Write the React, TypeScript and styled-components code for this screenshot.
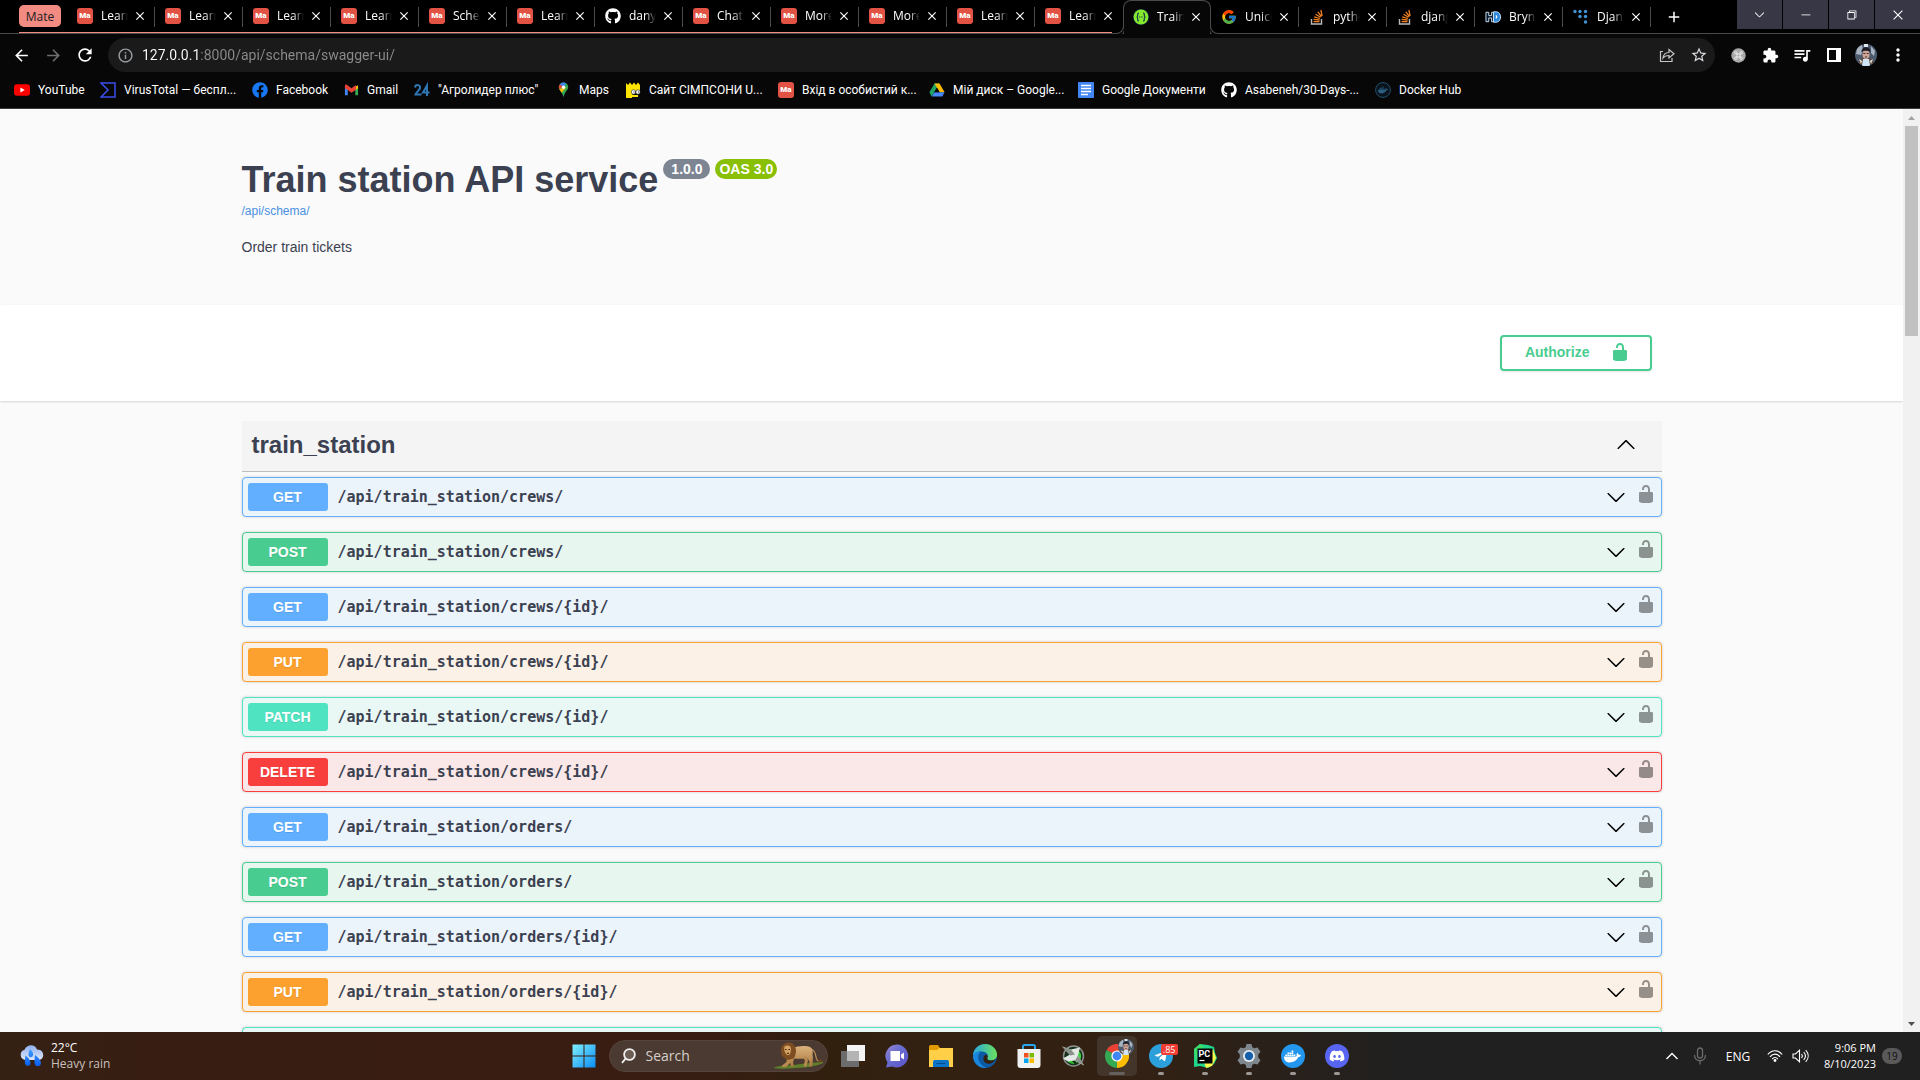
import React, { useState } from "react";
import styled, { createGlobalStyle, css } from "styled-components";
import {
  MdArrowBack,
  MdArrowForward,
  MdRefresh,
  MdInfoOutline,
  MdStarBorder,
  MdExtension,
  MdOutlineQueueMusic,
  MdMoreVert,
  MdClose,
  MdAdd,
} from "react-icons/md";
import { FaGithub, FaDocker, FaDiscord, FaFacebook, FaTelegramPlane } from "react-icons/fa";
import { FcGoogle } from "react-icons/fc";
import { VscChevronDown, VscChromeMinimize, VscChromeRestore, VscChromeClose } from "react-icons/vsc";

const uiFont = `"Open Sans", "Noto Sans", sans-serif`;
const pageFont = `"Liberation Sans", Arial, sans-serif`;
const monoFont = `"DejaVu Sans Mono", "Liberation Mono", monospace`;

const GlobalStyle = createGlobalStyle`
  *, *::before, *::after { box-sizing: border-box; }
  body { margin: 0; background: #000; }
  button { border: 0; padding: 0; background: none; color: inherit; font: inherit; cursor: pointer; }
  a { text-decoration: none; color: inherit; }
  svg { display: block; flex: none; }
`;

const Desktop = styled.div`
  display: flex;
  flex-direction: column;
  height: 100vh;
  overflow: hidden;
  font-family: ${uiFont};
  font-size: 12px;
  color: #fff;
`;

/* ---------- tab strip ---------- */

const TabStrip = styled.div`
  display: flex;
  height: 34px;
  padding-left: 19px;
  background: #000;
  border-bottom: 1px solid #4a4a4a;
`;

const TabGroup = styled.div`
  display: flex;
  align-items: center;
  height: 33px;
  border-bottom: 1px solid #f28b82;
  margin-right: 11px;
`;

const GroupChip = styled.button`
  width: 42px;
  height: 22px;
  margin-right: 6px;
  border-radius: 5px;
  background: #f28b82;
  color: #202124;
`;

const TabBox = styled.div<{ $active?: boolean; $bare?: boolean }>`
  position: relative;
  display: flex;
  flex: none;
  align-items: center;
  width: 88px;
  height: 33px;
  padding: 0 8px 0 10px;
  &::after {
    content: "";
    position: absolute;
    right: 0;
    top: 7px;
    width: 1px;
    height: 20px;
    background: ${(p) => (p.$bare ? "transparent" : "#4a4a4a")};
  }
  ${(p) =>
    p.$active &&
    css`
      height: 34px;
      padding: 0 7px 2px 9px;
      background: #070707;
      border: 1px solid #4a4a4a;
      border-bottom: 0;
      border-radius: 8px 8px 0 0;
      &::before,
      &::after {
        content: "";
        position: absolute;
        top: auto;
        bottom: 0;
        width: 8px;
        height: 8px;
        background: #000;
        border: 0 solid #4a4a4a;
        box-shadow: 0 3px 0 #070707;
      }
      &::before {
        left: -8px;
        border-width: 0 1px 1px 0;
        border-bottom-right-radius: 8px;
      }
      &::after {
        right: -8px;
        border-width: 0 0 1px 1px;
        border-bottom-left-radius: 8px;
      }
    `}
`;

const LastGroupTab = styled.div`
  width: 77px;
`;

const TabButton = styled.button`
  display: flex;
  flex: 1;
  min-width: 0;
  align-items: center;
  gap: 8px;
`;

const TabTitle = styled.span`
  flex: none;
  white-space: nowrap;
  text-align: left;
  line-height: 18px;
  mask-image: linear-gradient(90deg, #000 16px, transparent 27px);
`;

const CloseTab = styled.button`
  display: grid;
  place-items: center;
  width: 14px;
  height: 16px;
`;

const NewTab = styled.button`
  display: grid;
  place-items: center;
  width: 46px;
  height: 33px;
`;

const WindowButtons = styled.div`
  display: flex;
  gap: 1px;
  margin-left: auto;
  height: 29px;
`;

const WindowButton = styled.button`
  display: grid;
  place-items: center;
  width: 45px;
  background: #373746;
`;

/* ---------- toolbar ---------- */

const Toolbar = styled.div`
  display: flex;
  align-items: center;
  height: 42px;
  padding: 0 6px 0 5px;
  background: #070707;
`;

const ToolButton = styled.button<{ $dim?: boolean }>`
  display: grid;
  place-items: center;
  width: 32px;
  height: 32px;
  color: ${(p) => (p.$dim ? "#6f6f6f" : "#fff")};
`;

const Omnibox = styled.div`
  display: flex;
  flex: 1;
  align-items: center;
  height: 34px;
  margin: 0 7px;
  padding-left: 9px;
  border-radius: 17px;
  background: #1a1a1a;
`;

const SiteInfo = styled.button`
  display: grid;
  place-items: center;
  width: 16px;
  margin-right: 9px;
  color: #9aa0a6;
`;

const Address = styled.input`
  flex: 1;
  min-width: 0;
  height: 24px;
  padding: 0;
  border: 0;
  outline: 0;
  font: 14px/20px Roboto, ${uiFont};
  color: transparent;
  background: linear-gradient(90deg, #fff 57px, #8c8c8c 57px);
  background-clip: text;
`;

const Bookmarks = styled.nav`
  display: flex;
  align-items: center;
  height: 33px;
  padding: 0 0 4px 14px;
  background: #070707;
  border-bottom: 1px solid #3c3c3c;
`;

const Bookmark = styled.a<{ $width: number }>`
  display: flex;
  flex: none;
  align-items: center;
  gap: 8px;
  width: ${(p) => p.$width}px;
  white-space: nowrap;
  font: 12px/16px Roboto, ${uiFont};
`;

/* ---------- page ---------- */

const Viewport = styled.main`
  display: flex;
  flex: 1;
  min-height: 0;
  background: #fafafa;
  color: #3b4151;
  font-family: ${pageFont};
`;

const Document = styled.div`
  flex: 1;
  overflow: hidden;
`;

const Wrapper = styled.div`
  max-width: 1460px;
  margin: 0 auto;
  padding: 0 20px;
`;

const Info = styled.section`
  padding: 50px 0;
`;

const Title = styled.h1`
  display: flex;
  align-items: flex-start;
  gap: 5px;
  margin: 0;
  font-size: 36px;
  line-height: 41px;
`;

const Badge = styled.span<{ $green?: boolean }>`
  height: 20px;
  padding: 0 ${(p) => (p.$green ? 4 : 8)}px;
  border-radius: 10px;
  background: ${(p) => (p.$green ? "#89bf04" : "#7d8492")};
  color: #fff;
  font-size: 14px;
  line-height: 20px;
`;

const SchemaLink = styled.a`
  display: block;
  margin-top: 4px;
  color: #4990e2;
  font-size: 12px;
  line-height: 14px;
`;

const Description = styled.p`
  margin: 21px 0 0;
  font-size: 14px;
  line-height: 16px;
`;

const SchemeBar = styled.section`
  padding: 30px 0;
  background: #fff;
  box-shadow: 0 1px 2px rgba(0, 0, 0, 0.15);
`;

const SchemeInner = styled(Wrapper)`
  display: flex;
  justify-content: flex-end;
`;

const AuthorizeButton = styled.button`
  display: flex;
  align-items: center;
  gap: 20px;
  height: 36px;
  margin-right: 10px;
  padding: 0 20px 2px 23px;
  border: 2px solid #49cc90;
  border-radius: 4px;
  color: #49cc90;
  font-size: 14px;
  font-weight: 700;
  box-shadow: 0 1px 2px rgba(0, 0, 0, 0.1);
`;

const TagHeader = styled.h2`
  margin: 20px 0 5px;
  border-bottom: 1px solid rgba(59, 65, 81, 0.3);
  background: #f4f4f4;
`;

const TagButton = styled.button`
  display: flex;
  align-items: center;
  justify-content: space-between;
  width: 100%;
  height: 50px;
  padding: 0 26px 2px 10px;
  font-size: 24px;
  font-weight: 700;
  line-height: 30px;
`;

const Operations = styled.div`
  display: flex;
  flex-direction: column;
  gap: 15px;
`;

const Operation = styled.div<{ $color: string; $tint: string }>`
  display: flex;
  height: 40px;
  padding-right: 5px;
  border: 1px solid ${(p) => p.$color};
  border-radius: 4px;
  background: ${(p) => p.$tint};
  box-shadow: 0 0 3px rgba(0, 0, 0, 0.19);
`;

const Summary = styled.button`
  display: flex;
  flex: 1;
  align-items: center;
  gap: 10px;
  padding: 0 10px 0 5px;
`;

const Method = styled.span<{ $color: string }>`
  width: 80px;
  border-radius: 3px;
  background: ${(p) => p.$color};
  color: #fff;
  font-size: 14px;
  font-weight: 700;
  line-height: 28px;
  text-align: center;
  text-shadow: 0 1px 0 rgba(0, 0, 0, 0.1);
`;

const Path = styled.span`
  flex: 1;
  text-align: left;
  font-family: ${monoFont};
  font-size: 15px;
  font-weight: 700;
  line-height: 20px;
`;

const LockButton = styled.button`
  display: flex;
  align-items: center;
  padding-bottom: 6px;
  color: #000;
  opacity: 0.4;
`;

const ScrollTrack = styled.div`
  display: flex;
  flex-direction: column;
  align-items: center;
  width: 17px;
  background: #f1f1f1;
`;

const ScrollArrow = styled.span<{ $down?: boolean }>`
  display: grid;
  place-items: center;
  height: 17px;
  margin-top: ${(p) => (p.$down ? "auto" : 0)};
  color: ${(p) => (p.$down ? "#505050" : "#a3a3a3")};
`;

const ScrollThumb = styled.div`
  width: 13px;
  height: 210px;
  background: #c1c1c1;
`;

/* ---------- taskbar ---------- */

const Taskbar = styled.footer`
  display: grid;
  grid-template-columns: 1fr auto 1fr;
  align-items: center;
  flex: none;
  height: 48px;
  background: linear-gradient(90deg, #352114 0, #381d12 9%, #391d13 33%, #32200f 43%, #322114 60%, #202020 73%);
`;

const Weather = styled.button`
  display: flex;
  align-items: center;
  justify-self: start;
  gap: 7px;
  padding-left: 19px;
  text-align: left;
  line-height: 16px;
`;

const WeatherText = styled.span`
  display: flex;
  flex-direction: column;
`;

const Muted = styled.span`
  color: #c8c0bc;
`;

const Apps = styled.div`
  display: flex;
  align-items: center;
`;

const AppButton = styled.button<{ $active?: boolean }>`
  position: relative;
  display: grid;
  place-items: center;
  width: 40px;
  height: 40px;
  margin: 0 2px;
  border-radius: 5px;
  background: ${(p) => (p.$active ? "#44352b" : "none")};
`;

const Running = styled.span<{ $wide?: boolean }>`
  position: absolute;
  bottom: 1px;
  width: ${(p) => (p.$wide ? 16 : 6)}px;
  height: 3px;
  border-radius: 2px;
  background: ${(p) => (p.$wide ? "#66605c" : "#9d9894")};
`;

const Unread = styled.span`
  position: absolute;
  top: 8px;
  right: 3px;
  padding: 0 2px;
  border-radius: 2px;
  background: #f23c34;
  font-size: 9px;
  line-height: 11px;
`;

const Search = styled.label`
  display: flex;
  align-items: center;
  width: 219px;
  height: 32px;
  margin: 0 3px;
  padding: 0 3px 0 11px;
  gap: 10px;
  border: 1px solid #55443a;
  border-radius: 16px;
  background: #4b3a31;
`;

const SearchInput = styled.input`
  flex: 1;
  min-width: 0;
  padding: 0;
  border: 0;
  outline: 0;
  background: none;
  color: #fff;
  font: 14px/20px ${uiFont};
  &::placeholder {
    color: #d5cfcc;
    opacity: 1;
  }
`;

const Tray = styled.div`
  display: flex;
  align-items: center;
  justify-self: end;
  padding-right: 18px;
`;

const TrayButton = styled.button<{ $width: number }>`
  display: grid;
  place-items: center;
  width: ${(p) => p.$width}px;
  height: 40px;
`;

const Clock = styled.button`
  display: flex;
  flex-direction: column;
  width: 64px;
  margin-right: 6px;
  text-align: right;
  line-height: 16px;
  font-size: 11px;
`;

const Count = styled.span`
  width: 20px;
  border-radius: 8px;
  background: #5a5a5a;
  color: #111;
  font-size: 10px;
  line-height: 16px;
  text-align: center;
`;

const MateTile = styled.span`
  display: grid;
  place-items: center;
  flex: none;
  width: 16px;
  height: 16px;
  border-radius: 3px;
  background: #e35345;
  color: #fff;
  font: 900 8px/16px Roboto, sans-serif;
`;

/* ---------- icons ---------- */

const Mate = () => <MateTile aria-hidden="true">Ma</MateTile>;

const Swagger = () => (
  <svg width="16" height="16" viewBox="0 0 16 16">
    <circle cx="8" cy="8" r="8" fill="#173647" />
    <circle cx="8" cy="8" r="7.4" fill="#85ea2d" />
    <g fill="none" stroke="#173647" strokeWidth="1.2">
      <path d="M6 4C4.6 4 4.7 5 4.7 6.2S4.400 8 3.500 8c.9 0 1.200.6 1.200 1.800S4.600 12 6 12M10 4c1.400 0 1.300 1 1.300 2.200S11.600 8 12.500 8c-.9 0-1.200.6-1.200 1.800S11.400 12 10 12" />
      <path d="M6 8h4" strokeDasharray="1 .7" />
    </g>
  </svg>
);

const StackOverflow = () => (
  <svg width="16" height="16" viewBox="0 0 16 16" fill="none">
    <path d="M2.500 10v5h10v-5" stroke="#bcbbbb" strokeWidth="1.400" />
    <path d="M4.500 12.600h6M4.600 10.400l6 .6M5.200 7.800l5.700 1.700M6.600 5.200l5 3.100M8.800 2.800l3.700 4.700M11.800 1l1.400 5.800" stroke="#f48024" strokeWidth="1.300" />
  </svg>
);

const Hd = () => (
  <svg width="16" height="14" viewBox="0 0 17 14">
    <path d="M1 2h3v3.500h3V2h2v10H7V8H4v4H1z" fill="#0a1c30" stroke="#cfe4f5" />
    <path d="M9 1.500h3c6 0 6 11 0 11H9z" fill="#2b87dc" stroke="#cfe4f5" />
    <path d="M11.500 5v4c2 0 2-4 0-4z" fill="#fff" />
  </svg>
);

const Dots = () => (
  <svg width="16" height="16" viewBox="0 0 16 16" fill="#4294d6">
    {[[2, 2.5], [7, 2.5], [12.5, 2.5], [7, 7.5], [12.5, 7.5], [12.5, 13]].map(([x, y]) => (
      <circle key={`${x}-${y}`} cx={x} cy={y} r="1.700" />
    ))}
  </svg>
);

const YouTube = () => (
  <svg width="16" height="16" viewBox="0 0 16 16">
    <rect y="2.300" width="16" height="11.400" rx="3" fill="#f00" />
    <path d="M6.400 5.500v5L10.700 8z" fill="#fff" />
  </svg>
);

const VirusTotal = () => (
  <svg width="16" height="16" viewBox="0 0 16 16">
    <path d="M1 1h14v14H1l7-7z" fill="none" stroke="#3b4ef0" strokeWidth="1.500" />
  </svg>
);

const Gmail = () => (
  <svg width="15" height="16" viewBox="0 0 16 16">
    <path d="M1 4v9.500h3V6.500z" fill="#4285f4" />
    <path d="M15 4v9.500h-3V6.500z" fill="#34a853" />
    <path d="M12 4.500L15 2.800V6l-3 2.200z" fill="#fbbc04" />
    <path d="M1 6V3.500C1 2 2.500 2 3.300 2.700L8 6.200l4.700-3.500v5L8 11 4 8.100z" fill="#ea4335" />
  </svg>
);

const TwentyFour = () => (
  <svg width="16" height="16" viewBox="0 0 16 16" fill="none" stroke="#2f76b5" strokeWidth="2">
    <path d="M1 5.500C1.500 2 6.500 2.500 6 6 5.700 8 2 10.500 1.500 12.500H7.500M13 14V3.500L9 10.500h6.500" />
  </svg>
);

const Pin = () => (
  <svg width="15" height="16" viewBox="0 0 16 16">
    <path d="M8 0a5 5 0 0 0-5 5c0 3 4 5 5 11 1-6 5-8 5-11a5 5 0 0 0-5-5z" fill="#34a853" />
    <path d="M8 0a5 5 0 0 0-4 2l4 3 3-4a5 5 0 0 0-3-1z" fill="#4285f4" />
    <path d="M4 2a5 5 0 0 0-.6 5L8 4.500z" fill="#ea4335" />
    <path d="M3.400 7c.7 1.400 1.700 2.600 2.500 3.800L11 5z" fill="#fbbc04" />
    <circle cx="8" cy="5" r="1.800" fill="#fff" />
  </svg>
);

const Bart = () => (
  <svg width="16" height="16" viewBox="0 0 16 16">
    <path d="M1 16V1l2 2 2-2.500 2 2.500 2-2.500 2 2.500 2-2.500 2 2.500v6H8l-1 7z" fill="#ffe500" />
    <circle cx="8.500" cy="10" r="2.200" fill="#fff" stroke="#222" strokeWidth=".6" />
    <circle cx="13" cy="10" r="2.200" fill="#fff" stroke="#222" strokeWidth=".6" />
    <path d="M8.500 9.500h1v1h-1zM13 9.500h1v1h-1z" fill="#222" />
    <path d="M7 13h6v2H7z" fill="#ffe500" />
  </svg>
);

const Drive = () => (
  <svg width="16" height="16" viewBox="0 0 16 16">
    <path d="M5.500 1.500h5L5.300 10l-2.700 4.500L.4 10.300z" fill="#1fa463" />
    <path d="M5.500 1.500h5l5.100 8.800h-5z" fill="#ffba00" />
    <path d="M5.300 10.300h10.300l-2.300 4.200H2.700z" fill="#4688f4" />
    <path d="M8 5.800L10.600 10.300H5.300z" fill="#070707" />
  </svg>
);

const Docs = () => (
  <svg width="16" height="16" viewBox="0 0 16 16">
    <rect width="16" height="16" rx="1" fill="#4285f4" />
    <path d="M3 3.500h10M3 6.500h10M3 9.500h10M3 12.500h7" stroke="#fff" strokeWidth="1.500" />
  </svg>
);

const DockerHub = () => (
  <svg width="16" height="16" viewBox="0 0 16 16">
    <circle cx="8" cy="8" r="7.400" fill="#08131c" stroke="#24506e" />
    <FaDocker x="3" y="3" width="10" height="10" size={10} color="#2c5f82" />
  </svg>
);

const Share = () => (
  <svg width="16" height="16" viewBox="0 0 16 16" fill="none" stroke="#c4c7c5" strokeWidth="1.200">
    <path d="M4 4.500H1.500v10h11.500V11" />
    <path d="M4 11c.5-4 2.500-5.500 6-5.500V2.500l5 4.300-5 4.200V8.500C7.500 8.500 5.500 9 4 11z" />
  </svg>
);

const SidePanel = () => (
  <svg width="14" height="14" viewBox="0 0 14 14">
    <path d="M0 0h14v14H0zM2 2v10h7V2z" fill="#fff" fillRule="evenodd" />
  </svg>
);

const Command = () => (
  <svg width="15" height="15" viewBox="0 0 15 15">
    <circle cx="7.500" cy="7.500" r="7.200" fill="#a9a9a9" />
    <path d="M6 6V4.800A1.200 1.200 0 1 0 4.800 6h5.400A1.200 1.200 0 1 0 9 4.800v5.400A1.200 1.200 0 1 0 10.200 9H4.800A1.200 1.200 0 1 0 6 10.200z" fill="none" stroke="#f3f3f3" strokeWidth=".9" />
  </svg>
);

const Avatar = ({ size }: { size: number }) => (
  <svg width={size} height={size} viewBox="0 0 22 22">
    <circle cx="11" cy="11" r="11" fill="#4c5a6e" />
    <path d="M2 5a11 11 0 0 1 5-4l1 5-2 5-5-1zM16 2l4 5-1 5-3-3z" fill="#a9b4c2" />
    <path d="M9 0h4v3H9z" fill="#dbe6ee" />
    <path d="M3 18l4-4h8l4 4a11 11 0 0 1-16 0z" fill="#5d4a3c" />
    <path d="M8 15h6l1 6.500a11 11 0 0 1-8 0z" fill="#cfe4f4" />
    <path d="M4 15l3 2-1 3zM18 15l-3 2 1 3z" fill="#e6e2da" />
    <ellipse cx="11" cy="10.500" rx="3.600" ry="4.600" fill="#cfa596" />
    <path d="M6.500 8.500C6 1.500 16 1.500 15.500 8.500c-1-1.500-2-1.800-4.500-1.800s-3.500.3-4.500 1.800z" fill="#1c1c24" />
    <path d="M8.300 9.500h2M11.700 9.500h2M10 13h2" stroke="#40302f" />
  </svg>
);

const Unlocked = () => (
  <svg width="20" height="20" viewBox="0 0 20 20" fill="currentColor">
    <path d="M15.800 8H14V5.600C14 2.703 12.665 1 10 1 7.334 1 6 2.703 6 5.600V6h2v-.801C8 3.754 8.797 3 10 3c1.203 0 2 .754 2 2.199V8H4c-.553 0-1 .646-1 1.199V17c0 .549.428 1.139.951 1.307l1.197.387C5.672 18.861 6.550 19 7.100 19h5.800c.549 0 1.428-.139 1.951-.307l1.196-.387c.524-.167.953-.757.953-1.306V9.199C17 8.646 16.352 8 15.800 8z" />
  </svg>
);

const Arrow = ({ up }: { up?: boolean }) => (
  <svg width="20" height="20" viewBox="0 0 20 20" fill="#000">
    <path
      d={
        up
          ? "M17.418 13.908c.272.268.709.268.979 0s.271-.701 0-.969l-7.908-7.830c-.27-.268-.707-.268-.979 0l-7.908 7.830c-.27.268-.27.701 0 .969.271.268.709.268.979 0L10 6.767l7.418 7.141z"
          : "M17.418 6.109c.272-.268.709-.268.979 0s.271.701 0 .969l-7.908 7.830c-.27.268-.707.268-.979 0l-7.908-7.830c-.27-.268-.27-.701 0-.969.271-.268.709-.268.979 0L10 13.250l7.418-7.141z"
      }
    />
  </svg>
);

const Triangle = ({ down }: { down?: boolean }) => (
  <svg width="7" height="4" viewBox="0 0 7 4" fill="currentColor">
    <path d={down ? "M0 0h7L3.500 4z" : "M0 4h7L3.500 0z"} />
  </svg>
);

const Rain = () => (
  <svg width="25" height="22" viewBox="0 0 25 22">
    <defs>
      <linearGradient id="cloud" x1="0" y1="0" x2="0" y2="1">
        <stop offset="0" stopColor="#8fb0f0" />
        <stop offset="1" stopColor="#dfe6f7" />
      </linearGradient>
      <linearGradient id="drop" x1="0" y1="0" x2="0" y2="1">
        <stop offset="0" stopColor="#3fa0ff" />
        <stop offset="1" stopColor="#0a5cf0" />
      </linearGradient>
    </defs>
    <path d="M6 15a5.300 5.300 0 0 1-.5-10.300C7.500-.8 16-1.500 18 4.500 26 4 26 15 19.500 15z" fill="url(#cloud)" />
    <path d="M11 4c3 3 4 5 2.500 7.500-2 1.500-4 .5-4-2C9.500 8 10 6 11 4zM6.500 10.500c4 3 6 6.500 4.500 9.500-2 1.500-4.500 1-5-1.500-.3-2 0-5 .5-8zM16 10c4.500 3 7 7 5.500 10-2 2-5 1.500-5.800-1-.5-3 0-6 .3-9z" fill="url(#drop)" />
  </svg>
);

const Windows = () => (
  <svg width="24" height="24" viewBox="0 0 24 24">
    <defs>
      <linearGradient id="win" x1="0" y1="0" x2="1" y2="1">
        <stop offset="0" stopColor="#7ff0ff" />
        <stop offset="1" stopColor="#0a8cf5" />
      </linearGradient>
    </defs>
    <path d="M.5.500h11v11H.5zM12.500.500h11v11h-11zM.5 12.500h11v11H.5zM12.500 12.500h11v11h-11z" fill="url(#win)" />
  </svg>
);

const Magnifier = () => (
  <svg width="15" height="16" viewBox="0 0 15 16" fill="#6b5c54" stroke="#eee" strokeWidth="1.800">
    <circle cx="8.500" cy="6.500" r="5.400" />
    <path d="M4.800 10.300L1 14.800" />
  </svg>
);

const Lion = () => (
  <svg width="52" height="28" viewBox="0 0 52 28">
    <defs>
      <linearGradient id="lionBody" x1="0" y1="0" x2="0" y2="1">
        <stop offset="0" stopColor="#dbb27c" />
        <stop offset="1" stopColor="#a9783f" />
      </linearGradient>
    </defs>
    <path d="M1 26c8-3 14-2.500 20-3s22-3 31-3c-4 4-18 5.500-27 6S8 27.500 1 26z" fill="#5f7f2b" />
    <path d="M39 7c4 1 4.500 5 5 8s2 4.500 4 4.500" fill="none" stroke="#c08f55" strokeWidth="1.200" />
    <path d="M46.500 18c2-.5 3.500-1.500 4 0s-2 3-4 2.500z" fill="#6b4220" />
    <path d="M20 6c5-1.500 13-3 18-1 3 1.500 3 5 2.500 8 1 3 0 8-.5 11.500h-3l.5-5-2.500-3.500c-4 1-9 1-13 .500l-1 4 1 4h-3l-2-8z" fill="url(#lionBody)" />
    <path d="M34 14l2 4-1.500 6.500h-3l1.500-6-2-3zM15 15l-.500 5-4.500 3.500v1.500h4l4.500-4.500 2-5z" fill="#b98a50" />
    <path d="M11 3c2-3 8-3.500 10.500-.5 2.500 2 3 6.500 2 9.500-.5 3-2 5.500-4.500 5-2 1.500-5 1-6-1-2.500-.5-4-3-3.800-6C8.500 7.500 9 5 11 3z" fill="#7d4c20" />
    <path d="M12.500 4.500c2-1.500 5-1 6 .5 1 2 .3 5-.5 7-.7 1.500-3.500 1.500-4 0-1.500-2-2.500-5-1.500-7.500z" fill="#d3a263" />
    <path d="M13 7.500h1.500M16.500 7.500h1.500M15 11.300h2" stroke="#371c0c" />
  </svg>
);

const TaskView = () => (
  <svg width="24" height="22" viewBox="0 0 24 22">
    <path d="M6 0h18v16H6z" fill="#f4f4f4" />
    <path d="M0 6h18v16H0z" fill="#6c6c6c" />
    <path d="M6 6h12v10H6z" fill="#b4b4b4" />
  </svg>
);

const Chat = () => (
  <svg width="24" height="24" viewBox="0 0 24 24">
    <defs>
      <linearGradient id="chat" x1="0" y1="0" x2="1" y2="1">
        <stop offset="0" stopColor="#9b86d0" />
        <stop offset=".4" stopColor="#6a6fd0" />
        <stop offset="1" stopColor="#5a50c8" />
      </linearGradient>
    </defs>
    <path d="M12 .5A11.500 11.500 0 1 1 7 22.500L1 23.500l1.500-5A11.500 11.500 0 0 1 12 .5z" fill="url(#chat)" />
    <path d="M5.500 7H15v10H5.500zM16 10.500l3-2v7l-3-2z" fill="#fff" />
  </svg>
);

const Folder = () => (
  <svg width="24" height="22" viewBox="0 0 24 22">
    <path d="M0 1.500C0 .5 1 0 2 0h7l2 3-2 3H0z" fill="#e09a00" />
    <path d="M0 5h8l2.500-2H24v19H0z" fill="#ffd047" />
    <path d="M4 22v-5c0-1.500 1-2 2-2h12c1 0 2 .5 2 2v5z" fill="#0b74c9" />
    <path d="M7.500 18.500h9" stroke="#064c8c" />
  </svg>
);

const Edge = () => (
  <svg width="24" height="24" viewBox="0 0 24 24">
    <defs>
      <linearGradient id="edgeTop" x1="0" y1="0" x2="1" y2="0">
        <stop offset="0" stopColor="#2aa8e0" />
        <stop offset="1" stopColor="#6be05a" />
      </linearGradient>
    </defs>
    <circle cx="12" cy="12" r="12" fill="#0c59a4" />
    <path d="M0 12C0 5 5.500 0 12 0s12 5 12 10.500c0 4-3 6-6 6s-4.500-1.500-3.500-3C16 9.500 12 7.500 8 7.500S1 9.500 0 12z" fill="url(#edgeTop)" />
    <path d="M0 12c1-3.500 4.500-4.500 8-4.500-3 2-3.500 6-2 9.500s4.500 6 8 6.800C6 25 0 19 0 12z" fill="#1b87dc" />
    <path d="M14.500 13.500c-1 1.500.5 3 3.500 3 2 0 3.500-.8 4.500-1.500C21 19 17 20.500 14 19.500c-4-1.500-5-6-1.500-9 1.500.3 2.700 1.500 2 3z" fill="#33200f" />
  </svg>
);

const Store = () => (
  <svg width="24" height="24" viewBox="0 0 24 24">
    <path d="M6 7V2.500C6 1.500 6.500 1 7.500 1h9c1 0 1.500.5 1.500 1.500V7" fill="none" stroke="#2aa4ea" strokeWidth="2" />
    <path d="M.5 5h23v16c0 2-1 3-3 3h-17c-2 0-3-1-3-3z" fill="#f1f1f1" />
    <path d="M7 9h4.500v4.500H7z" fill="#f25022" />
    <path d="M12.500 9H17v4.500h-4.500z" fill="#7fba00" />
    <path d="M7 14.500h4.500V19H7z" fill="#00a4ef" />
    <path d="M12.500 14.500H17V19h-4.500z" fill="#ffb900" />
  </svg>
);

const Afterburner = () => (
  <svg width="24" height="24" viewBox="0 0 24 24">
    <circle cx="12.500" cy="12" r="10" fill="#16301a" stroke="#8b8f8b" strokeWidth="1.500" />
    <path d="M15 5a8 8 0 0 1 5 9l-4 5-4-5z" fill="#38d23c" />
    <path d="M4.500 13l4 1 5 6a8.500 8.500 0 0 1-9-7z" fill="#2fc233" />
    <path d="M1 2.500l9 3 9-2-2 8 6 10-9-5-7 1-5-3 7-4z" fill="#e4e8e4" />
    <path d="M1 2.500l9 3 4 5-5 1zM17 11.500l6 10-9-5z" fill="#8b918b" />
  </svg>
);

const Chrome = () => (
  <svg width="24" height="24" viewBox="0 0 24 24">
    <path d="M12 12L1.600 6a12 12 0 0 1 20.800 0z" fill="#ea4335" />
    <path d="M12 12l-.1 12A12 12 0 0 1 1.600 6z" fill="#34a853" />
    <path d="M12 12l10.400-6A12 12 0 0 1 12 24z" fill="#fbbc04" />
    <path d="M12 6.500h10.700L22.400 6H12zM16.800 14.800L11.900 24l3-8z" fill="#fbbc04" />
    <circle cx="12" cy="12" r="5.600" fill="#fff" />
    <circle cx="12" cy="12" r="4.400" fill="#4285f4" />
  </svg>
);

const ProfileOverlay = styled.span`
  position: absolute;
  top: 3px;
  right: 3px;
`;

const Disc = styled.span<{ $color: string }>`
  display: grid;
  place-items: center;
  width: 24px;
  height: 24px;
  border-radius: 12px;
  background: ${(p) => p.$color};
`;

const PyCharm = () => (
  <svg width="24" height="24" viewBox="0 0 24 24">
    <path d="M1 5l6-5 8 1 6 2 1 6 2 5-3 6-6 4-8-2-6 1z" fill="#21d789" />
    <path d="M20 5l3 9-4 8-6 2-2-6z" fill="#fcf84a" />
    <path d="M1 5l6-5 4 2-8 14z" fill="#3ddc6b" />
    <rect x="4.500" y="4.500" width="15" height="15" fill="#000" />
    <path d="M6.500 16.500h5" stroke="#fff" strokeWidth="1.200" />
    <text x="5.500" y="12.500" fill="#fff" fontFamily="Roboto" fontWeight="700" fontSize="9">PC</text>
  </svg>
);

const Gear = () => (
  <svg width="24" height="24" viewBox="0 0 24 24">
    <path d="M9.500 0h5l.8 3.200 2 1.100L20.500 3.400 23.500 7.700 21.200 10.500v3L23.500 16.300 20.500 20.600l-3.200-.9-2 1.100L14.500 24h-5l-.8-3.200-2-1.100-3.200.9L.5 16.300l2.300-2.800v-3L.5 7.700l3-4.300 3.200.9 2-1.100z" fill="#7e868e" />
    <circle cx="12" cy="12" r="6" fill="#e8edf1" />
    <circle cx="12" cy="12" r="4.200" fill="#1560a8" />
  </svg>
);

const TrayChevron = () => (
  <svg width="14" height="14" viewBox="0 0 14 14" fill="none" stroke="#fff" strokeWidth="1.400">
    <path d="M1.500 10L7 4.500 12.500 10" />
  </svg>
);

const Mic = () => (
  <svg width="14" height="18" viewBox="0 0 14 18" fill="none" stroke="#6b6b6b" strokeWidth="1.300">
    <rect x="4.500" y="1" width="5" height="10" rx="2.500" />
    <path d="M1.500 8c0 7.500 11 7.500 11 0M7 14v3.500" />
  </svg>
);

const Wifi = () => (
  <svg width="16" height="14" viewBox="0 0 16 14" fill="none" stroke="#fff" strokeWidth="1.200">
    <path d="M.8 5.500c4-5 10.400-5 14.400 0M3 7.800c3-3.600 7-3.600 10 0M5.200 10c1.800-2 3.800-2 5.600 0" />
    <circle cx="8" cy="11.500" r="1.400" fill="#fff" stroke="none" />
  </svg>
);

const Speaker = () => (
  <svg width="17" height="14" viewBox="0 0 17 14" fill="none" stroke="#fff" strokeWidth="1.100">
    <path d="M1 5v4h2.500L7.500 12.800V1.200L3.500 5zM9.500 5c1 1.200 1 2.800 0 4M11.700 3c2.200 2.500 2.200 5.500 0 8M13.700 1.200c3.300 3.500 3.300 8.100 0 11.600" />
  </svg>
);

/* ---------- data ---------- */

type TabInfo = { title: string; icon: React.ReactNode };

const groupTabs: TabInfo[] = [
  ...["Learn", "Learn", "Learn", "Learn", "Sche", "Learn"].map((title) => ({ title, icon: <Mate /> })),
  { title: "dany", icon: <FaGithub size={16} /> },
  ...["Chat", "More", "More", "Learn", "Learn"].map((title) => ({ title, icon: <Mate /> })),
];

const otherTabs: TabInfo[] = [
  { title: "Train", icon: <Swagger /> },
  { title: "Unico", icon: <FcGoogle size={16} /> },
  { title: "pytho", icon: <StackOverflow /> },
  { title: "djang", icon: <StackOverflow /> },
  { title: "Bryn", icon: <Hd /> },
  { title: "Djan", icon: <Dots /> },
];

const bookmarks = [
  { label: "YouTube", width: 86, icon: <YouTube /> },
  { label: "VirusTotal — беспл...", width: 152, icon: <VirusTotal /> },
  { label: "Facebook", width: 92, icon: <FaFacebook size={16} color="#1877f2" /> },
  { label: "Gmail", width: 70, icon: <Gmail /> },
  { label: "\"Агролидер плюс\"", width: 142, icon: <TwentyFour /> },
  { label: "Maps", width: 69, icon: <Pin /> },
  { label: "Сайт СІМПСОНИ U...", width: 153, icon: <Bart /> },
  { label: "Вхід в особистий к...", width: 151, icon: <Mate /> },
  { label: "Мій диск – Google...", width: 149, icon: <Drive /> },
  { label: "Google Документи", width: 143, icon: <Docs /> },
  { label: "Asabeneh/30-Days-...", width: 154, icon: <FaGithub size={16} /> },
  { label: "Docker Hub", width: 90, icon: <DockerHub /> },
];

const methods = {
  GET: { color: "#61affe", tint: "#ebf3fb" },
  POST: { color: "#49cc90", tint: "#e8f6f0" },
  PUT: { color: "#fca130", tint: "#fbf1e6" },
  PATCH: { color: "#50e3c2", tint: "#e9f8f5" },
  DELETE: { color: "#f93e3e", tint: "#fae7e7" },
};

const operations: [keyof typeof methods, string][] = [
  ["GET", "/api/train_station/crews/"],
  ["POST", "/api/train_station/crews/"],
  ["GET", "/api/train_station/crews/{id}/"],
  ["PUT", "/api/train_station/crews/{id}/"],
  ["PATCH", "/api/train_station/crews/{id}/"],
  ["DELETE", "/api/train_station/crews/{id}/"],
  ["GET", "/api/train_station/orders/"],
  ["POST", "/api/train_station/orders/"],
  ["GET", "/api/train_station/orders/{id}/"],
  ["PUT", "/api/train_station/orders/{id}/"],
  ["PATCH", "/api/train_station/orders/{id}/"],
];

const Tab = ({ tab, active, bare }: { tab: TabInfo; active?: boolean; bare?: boolean }) => (
  <TabBox $active={active} $bare={bare}>
    <TabButton aria-current={active ? "page" : undefined}>
      {tab.icon}
      <TabTitle>{tab.title}</TabTitle>
    </TabButton>
    <CloseTab aria-label={`Close ${tab.title}`}>
      <MdClose size={14} />
    </CloseTab>
  </TabBox>
);

export default function App() {
  const [address, setAddress] = useState("127.0.0.1:8000/api/schema/swagger-ui/");
  const [query, setQuery] = useState("");
  const [open, setOpen] = useState(true);

  return (
    <Desktop>
      <GlobalStyle />
      <TabStrip>
        <TabGroup>
          <GroupChip>Mate</GroupChip>
          {groupTabs.slice(0, -1).map((tab, i) => (
            <Tab key={i} tab={tab} />
          ))}
          <LastGroupTab>
            <Tab tab={groupTabs[groupTabs.length - 1]} bare />
          </LastGroupTab>
        </TabGroup>
        {otherTabs.map((tab, i) => (
          <Tab key={i} tab={tab} active={i === 0} />
        ))}
        <NewTab aria-label="New tab">
          <MdAdd size={18} />
        </NewTab>
        <WindowButtons>
          <WindowButton aria-label="Search tabs"><VscChevronDown size={15} /></WindowButton>
          <WindowButton aria-label="Minimize"><VscChromeMinimize size={13} /></WindowButton>
          <WindowButton aria-label="Restore"><VscChromeRestore size={13} /></WindowButton>
          <WindowButton aria-label="Close window"><VscChromeClose size={14} /></WindowButton>
        </WindowButtons>
      </TabStrip>

      <Toolbar>
        <ToolButton aria-label="Back"><MdArrowBack size={19} /></ToolButton>
        <ToolButton $dim aria-label="Forward"><MdArrowForward size={19} /></ToolButton>
        <ToolButton aria-label="Reload"><MdRefresh size={20} /></ToolButton>
        <Omnibox>
          <SiteInfo aria-label="Site information"><MdInfoOutline size={17} /></SiteInfo>
          <Address aria-label="Address" value={address} onChange={(e) => setAddress(e.target.value)} />
          <ToolButton aria-label="Share"><Share /></ToolButton>
          <ToolButton aria-label="Bookmark this page"><MdStarBorder size={18} color="#dadce0" /></ToolButton>
        </Omnibox>
        <ToolButton aria-label="Shortcuts extension"><Command /></ToolButton>
        <ToolButton aria-label="Extensions"><MdExtension size={17} /></ToolButton>
        <ToolButton aria-label="Media"><MdOutlineQueueMusic size={20} /></ToolButton>
        <ToolButton aria-label="Side panel"><SidePanel /></ToolButton>
        <ToolButton aria-label="Profile"><Avatar size={22} /></ToolButton>
        <ToolButton aria-label="Menu"><MdMoreVert size={20} /></ToolButton>
      </Toolbar>

      <Bookmarks aria-label="Bookmarks">
        {bookmarks.map((b) => (
          <Bookmark key={b.label} href="#" $width={b.width}>
            {b.icon}
            {b.label}
          </Bookmark>
        ))}
      </Bookmarks>

      <Viewport>
        <Document>
          <Wrapper>
            <Info>
              <Title>
                Train station API service
                <Badge>1.0.0</Badge>
                <Badge $green>OAS 3.0</Badge>
              </Title>
              <SchemaLink href="#">/api/schema/</SchemaLink>
              <Description>Order train tickets</Description>
            </Info>
          </Wrapper>
          <SchemeBar>
            <SchemeInner>
              <AuthorizeButton>
                Authorize
                <Unlocked />
              </AuthorizeButton>
            </SchemeInner>
          </SchemeBar>
          <Wrapper>
            <TagHeader>
              <TagButton aria-expanded={open} onClick={() => setOpen(!open)}>
                train_station
                <Arrow up={open} />
              </TagButton>
            </TagHeader>
            {open && (
              <Operations>
                {operations.map(([method, path]) => (
                  <Operation key={method + path} $color={methods[method].color} $tint={methods[method].tint}>
                    <Summary>
                      <Method $color={methods[method].color}>{method}</Method>
                      <Path>{path}</Path>
                      <Arrow />
                    </Summary>
                    <LockButton aria-label={`Authorize ${method} ${path}`}>
                      <Unlocked />
                    </LockButton>
                  </Operation>
                ))}
              </Operations>
            )}
          </Wrapper>
        </Document>
        <ScrollTrack>
          <ScrollArrow><Triangle /></ScrollArrow>
          <ScrollThumb />
          <ScrollArrow $down><Triangle down /></ScrollArrow>
        </ScrollTrack>
      </Viewport>

      <Taskbar>
        <Weather>
          <Rain />
          <WeatherText>
            <span>22°C</span>
            <Muted>Heavy rain</Muted>
          </WeatherText>
        </Weather>
        <Apps>
          <AppButton aria-label="Start"><Windows /></AppButton>
          <Search>
            <Magnifier />
            <SearchInput aria-label="Search" placeholder="Search" value={query} onChange={(e) => setQuery(e.target.value)} />
            <Lion />
          </Search>
          <AppButton aria-label="Task view"><TaskView /></AppButton>
          <AppButton aria-label="Chat"><Chat /></AppButton>
          <AppButton aria-label="File Explorer"><Folder /></AppButton>
          <AppButton aria-label="Edge"><Edge /></AppButton>
          <AppButton aria-label="Store"><Store /></AppButton>
          <AppButton aria-label="Afterburner"><Afterburner /></AppButton>
          <AppButton $active aria-label="Chrome">
            <Chrome />
            <ProfileOverlay><Avatar size={16} /></ProfileOverlay>
            <Running $wide />
          </AppButton>
          <AppButton aria-label="Telegram">
            <Disc $color="#2ba0da"><FaTelegramPlane size={14} /></Disc>
            <Unread>.85</Unread>
            <Running />
          </AppButton>
          <AppButton aria-label="PyCharm"><PyCharm /><Running /></AppButton>
          <AppButton aria-label="Settings"><Gear /><Running /></AppButton>
          <AppButton aria-label="Docker"><Disc $color="#2396ed"><FaDocker size={17} /></Disc><Running /></AppButton>
          <AppButton aria-label="Discord"><Disc $color="#5865f2"><FaDiscord size={16} /></Disc><Running /></AppButton>
        </Apps>
        <Tray>
          <TrayButton $width={28} aria-label="Hidden icons"><TrayChevron /></TrayButton>
          <TrayButton $width={28} aria-label="Microphone"><Mic /></TrayButton>
          <TrayButton $width={48}>ENG</TrayButton>
          <TrayButton $width={26} aria-label="Network"><Wifi /></TrayButton>
          <TrayButton $width={24} aria-label="Volume"><Speaker /></TrayButton>
          <Clock>
            <span>9:06 PM</span>
            <span>8/10/2023</span>
          </Clock>
          <Count>19</Count>
        </Tray>
      </Taskbar>
    </Desktop>
  );
}
